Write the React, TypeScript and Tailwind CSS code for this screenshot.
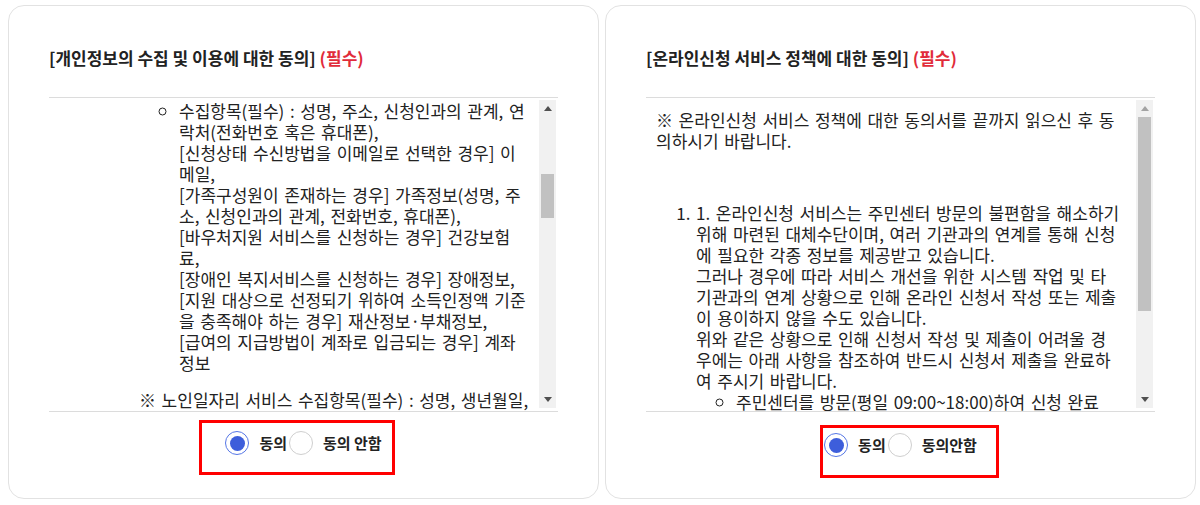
import React from 'react';

const leftItems = [
  '수집항목(필수) : 성명, 주소, 신청인과의 관계, 연',
  '락처(전화번호 혹은 휴대폰),',
  '[신청상태 수신방법을 이메일로 선택한 경우] 이',
  '메일,',
  '[가족구성원이 존재하는 경우] 가족정보(성명, 주',
  '소, 신청인과의 관계, 전화번호, 휴대폰),',
  '[바우처지원 서비스를 신청하는 경우] 건강보험',
  '료,',
  '[장애인 복지서비스를 신청하는 경우] 장애정보,',
  '[지원 대상으로 선정되기 위하여 소득인정액 기준',
  '을 충족해야 하는 경우] 재산정보·부채정보,',
  '[급여의 지급방법이 계좌로 입금되는 경우] 계좌',
  '정보',
];

const rightItem = [
  '1. 온라인신청 서비스는 주민센터 방문의 불편함을 해소하기',
  '위해 마련된 대체수단이며, 여러 기관과의 연계를 통해 신청',
  '에 필요한 각종 정보를 제공받고 있습니다.',
  '그러나 경우에 따라 서비스 개선을 위한 시스템 작업 및 타',
  '기관과의 연계 상황으로 인해 온라인 신청서 작성 또는 제출',
  '이 용이하지 않을 수도 있습니다.',
  '위와 같은 상황으로 인해 신청서 작성 및 제출이 어려울 경',
  '우에는 아래 사항을 참조하여 반드시 신청서 제출을 완료하',
  '여 주시기 바랍니다.',
];

function Lines({ lines }: { lines: string[] }) {
  return (
    <>
      {lines.map((line, i) => (
        <React.Fragment key={i}>
          {i > 0 && <br />}
          {line}
        </React.Fragment>
      ))}
    </>
  );
}

function Arrow({ up, light }: { up?: boolean; light?: boolean }) {
  return (
    <div className="flex h-[17px] w-full items-center justify-center">
      <svg width="8" height="5" viewBox="0 0 8 5">
        <polygon
          points={up ? '0,5 8,5 4,0' : '0,0 8,0 4,5'}
          fill={light ? '#a3a3a3' : '#505050'}
        />
      </svg>
    </div>
  );
}

function Scrollbar({ thumbTop, thumbHeight, atTop }: { thumbTop: string; thumbHeight: string; atTop?: boolean }) {
  return (
    <div className="mr-[2px] mt-[2px] mb-[3px] flex w-[17px] flex-col bg-[#f1f1f1]">
      <Arrow up light={atTop} />
      <div className="relative flex-1">
        <div className={`absolute left-[2px] right-[2px] bg-[#c1c1c1] ${thumbTop} ${thumbHeight}`} />
      </div>
      <Arrow />
    </div>
  );
}

function Radio({ checked }: { checked?: boolean }) {
  if (checked) {
    return (
      <span className="flex h-6 w-6 shrink-0 items-center justify-center rounded-full border-[1.5px] border-[#5576e6] bg-white">
        <span className="block h-[15px] w-[15px] rounded-full bg-[#3d5edb]" />
      </span>
    );
  }
  return <span className="block h-6 w-6 shrink-0 rounded-full border border-[#cfcfcf] bg-white" />;
}

function Card({
  title,
  children,
  scrollbar,
  noLabel,
  radioClass,
  boxClass,
}: {
  title: string;
  children: React.ReactNode;
  scrollbar: React.ReactNode;
  noLabel: string;
  radioClass: string;
  boxClass: string;
}) {
  return (
    <div className="flex h-[494px] flex-1 flex-col rounded-2xl border border-[#e2e2e2] bg-white px-10 pt-10">
      <h2 className="mb-[27px] h-6 text-[17px] leading-6 font-bold text-[#222]">
        {title} <span className="text-[#e12b3a]">(필수)</span>
      </h2>
      <div className="flex h-[315px] border-y border-[#dcdcdc]">
        <div className="flex-1 overflow-hidden text-[17px] leading-[21px] whitespace-nowrap text-[#222] [word-spacing:1.8px]">
          {children}
        </div>
        {scrollbar}
      </div>
      <div className={`flex justify-center ${radioClass}`}>
        <div className="relative flex h-6 items-center text-[15px] font-semibold text-[#222]">
          <div className={`pointer-events-none absolute border-[3px] border-[#ff0000] ${boxClass}`} />
          <Radio checked />
          <span className="ml-[10px]">동의</span>
          <span className="ml-[2px] block">
            <Radio />
          </span>
          <span className="ml-[10px]">{noLabel}</span>
        </div>
      </div>
    </div>
  );
}

export default function App() {
  return (
    <div className="flex h-[505px] gap-1.5 bg-white pt-[5px] pr-1 pl-2 font-['Noto_Sans_CJK_KR',sans-serif]">
      <Card
        title="[개인정보의 수집 및 이용에 대한 동의]"
        noLabel="동의 안함"
        radioClass="mt-[19px]"
        boxClass="-left-[26px] -right-[13px] -top-[11px] -bottom-[20px]"
        scrollbar={<Scrollbar thumbTop="top-[57px]" thumbHeight="h-[44px]" />}
      >
        <div className="pt-[2px] pl-[10px]">
          <div className="pl-20">
            <ul className="mb-4 list-[circle] pl-10">
              <li>
                <Lines lines={leftItems} />
              </li>
            </ul>
            <p>※ 노인일자리 서비스 수집항목(필수) : 성명, 생년월일,</p>
          </div>
        </div>
      </Card>
      <Card
        title="[온라인신청 서비스 정책에 대한 동의]"
        noLabel="동의안함"
        radioClass="mt-[21px]"
        boxClass="-left-[4px] -right-[22px] -top-[8px] -bottom-[21px]"
        scrollbar={<Scrollbar atTop thumbTop="top-0" thumbHeight="h-[194px]" />}
      >
        <div className="pt-[11px] pl-[10px]">
          <p className="mb-[51px]">
            <Lines lines={['※ 온라인신청 서비스 정책에 대한 동의서를 끝까지 읽으신 후 동', '의하시기 바랍니다.']} />
          </p>
          <ol className="list-decimal pl-10">
            <li>
              <Lines lines={rightItem} />
              <ul className="list-[circle] pl-10">
                <li>주민센터를 방문(평일 09:00~18:00)하여 신청 완료</li>
              </ul>
            </li>
          </ol>
        </div>
      </Card>
    </div>
  );
}
